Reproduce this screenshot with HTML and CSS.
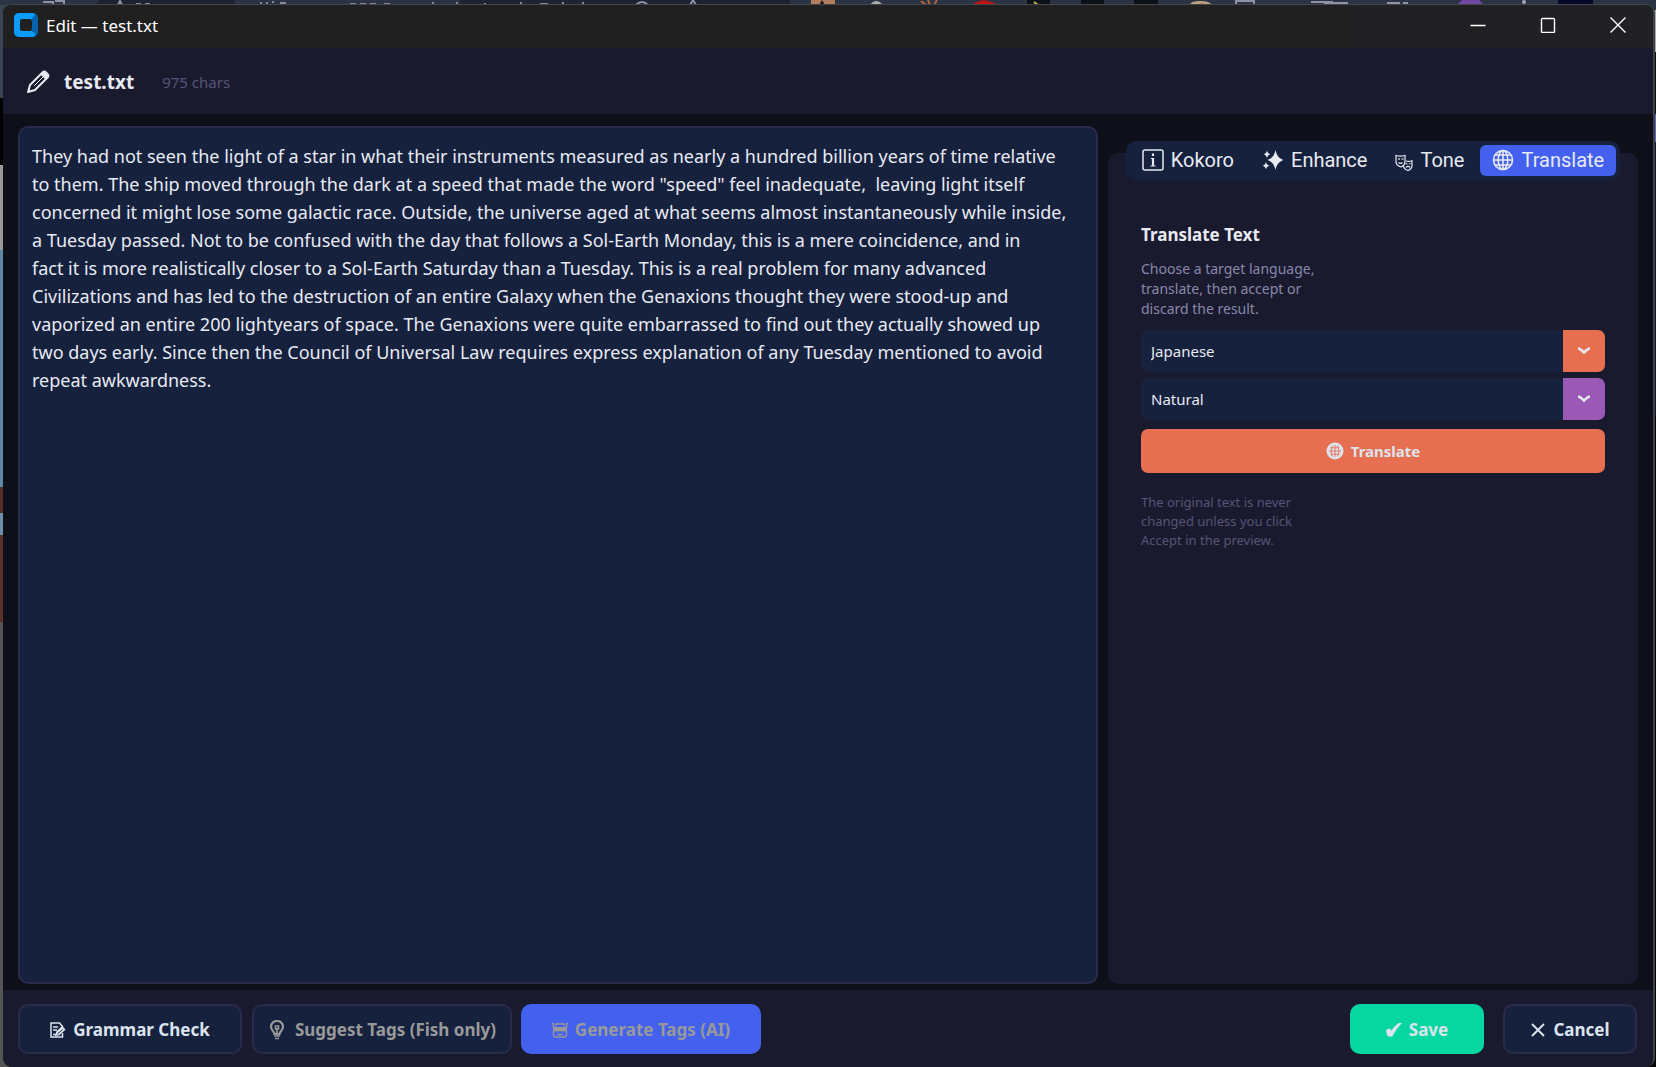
FILE: index.html
```html
<!DOCTYPE html>
<html lang="en">
<head>
    <meta charset="UTF-8">
    <meta name="viewport" content="width=device-width, initial-scale=1.0">
    <title>Edit — test.txt</title>
    <link rel="stylesheet" href="styles.css">
</head>
<body>
    <!-- sliver of the browser behind the window -->
    <svg class="desktop-top" viewBox="0 0 1656 5" preserveAspectRatio="none" aria-hidden="true">
        <path d="M100 0h135v5H94zM460 0h330v5H460z" fill="#1c2431"/>
        <path d="M43 2h10v3M55 1h9v4M118 5l2-4 2 4M636 5q6-6 12 0M690 5l3-5 3 5M1236 5V1h18v4M1311 2h22M1387 3h13M1403 3h5" fill="none" stroke="#8d92a8" stroke-width="2"/>
        <path d="M136 4h5M145 4h5M260 3h2M266 3h2M272 2h2M280 3h6M350 4h6M360 4h6M370 4h6M384 4h6M432 3h2M456 3h2M484 4h2M520 3h2M540 4h8M562 3h2M582 3h2" stroke="#858a9a" stroke-width="2"/>
        <path d="M811 0h24v5h-24z" fill="#b07d5e"/>
        <path d="M819 5l3-5 3 5z" fill="#1a1a1a"/>
        <path d="M870 5q6-8 13 0z" fill="#aaa"/>
        <path d="M921 1l5 4M928 0l2 5M937 0l-3 5" stroke="#b5623c" stroke-width="2"/>
        <path d="M974 5V3l9-3 12 3v2z" fill="#c31212"/>
        <path d="M1027 0h23v5h-23zM1081 0h23v5h-23zM1134 0h24v5h-24z" fill="#0c1019"/>
        <path d="M1034 2l4 3" stroke="#c5b53a" stroke-width="2"/>
        <path d="M1190 5q0-4 10-4t12 4z" fill="#b99f7b"/>
        <path d="M1197 5q5-3 10 0z" fill="#b33b3b"/>
        <path d="M1324 2h24v3h-24z" fill="#8d92a8"/>
        <path d="M1457 5l5-5h17l5 5z" fill="#7046a5"/>
        <circle cx="1524" cy="2" r="2" fill="#a4a8ba"/>
        <path d="M1558 0h35v5h-35z" fill="#04092c"/>
    </svg>

    <div class="window">
        <header class="titlebar">
            <svg class="app-logo" viewBox="0 0 24 24" aria-hidden="true">
                <rect width="24" height="24" rx="5" fill="#0562ae"/>
                <path d="M5 0h13a2 2 0 0 1 1 4l-1 2v12l1 1a2.500 2.500 0 0 1-1 5H5a5 5 0 0 1-5-5V5a5 5 0 0 1 5-5z" fill="#0a9bfb"/>
                <rect x="6" y="6" width="12" height="12" rx="2" fill="#202020"/>
            </svg>
            <span class="titlebar-text">Edit — test.txt</span>
            <div class="window-controls">
                <button type="button" aria-label="Minimize">
                    <svg viewBox="0 0 16 16"><path d="M0.500 8.500h15"/></svg>
                </button>
                <button type="button" aria-label="Maximize">
                    <svg viewBox="0 0 16 16"><rect x="1.500" y="1.500" width="13" height="14" rx="1"/></svg>
                </button>
                <button type="button" aria-label="Close">
                    <svg viewBox="0 0 16 16"><path d="M0.500 0.500l15 15M15.500 0.500l-15 15"/></svg>
                </button>
            </div>
        </header>

        <div class="file-header">
            <svg class="pencil" viewBox="0 0 24 24" aria-hidden="true">
                <path d="M2 22l2-7L16.500 2.500a2.500 2.500 0 0 1 3.500 0l1.500 1.500a2.500 2.500 0 0 1 0 3.500L9 20z" fill="none" stroke="currentColor" stroke-width="2" stroke-linejoin="round"/>
                <path d="M14.500 4.500l2.500-2.500h3l2.500 2.500v3L20 10zM1.500 22.500l1-4 3 3z" fill="currentColor"/>
                <path d="M8 16L17 7" stroke="currentColor" stroke-width="1"/>
            </svg>
            <h1>test.txt</h1>
            <span class="char-count">975 chars</span>
        </div>

        <main class="workspace">
            <textarea class="editor" aria-label="File text" spellcheck="false">They had not seen the light of a star in what their instruments measured as nearly a hundred billion years of time relative
to them. The ship moved through the dark at a speed that made the word "speed" feel inadequate,  leaving light itself
concerned it might lose some galactic race. Outside, the universe aged at what seems almost instantaneously while inside,
a Tuesday passed. Not to be confused with the day that follows a Sol-Earth Monday, this is a mere coincidence, and in
fact it is more realistically closer to a Sol-Earth Saturday than a Tuesday. This is a real problem for many advanced
Civilizations and has led to the destruction of an entire Galaxy when the Genaxions thought they were stood-up and
vaporized an entire 200 lightyears of space. The Genaxions were quite embarrassed to find out they actually showed up
two days early. Since then the Council of Universal Law requires express explanation of any Tuesday mentioned to avoid
repeat awkwardness.</textarea>

            <aside class="side">
                <nav class="tabs" role="tablist">
                    <button type="button" class="tab" role="tab">
                        <svg class="icon-lg" viewBox="0 0 22 22"><rect x="1" y="1" width="20" height="20" rx="2" fill="none" stroke="currentColor" stroke-width="1.500"/><path d="M11 9v8M11 4.500v2.500" stroke="currentColor" stroke-width="2.200"/><path d="M9 9.500h2M8.500 17h5" stroke="currentColor"/></svg>
                        Kokoro
                    </button>
                    <button type="button" class="tab" role="tab">
                        <svg class="icon-lg" viewBox="0 0 22 22"><path d="M13.500 1c1.300 5.500 3 8 8 10-5 2-6.700 4.500-8 10-1.300-5.500-3-8-8-10 5-2 6.700-4.500 8-10zM5 1.500c.6 2.200 1.400 3.200 3.500 3.800C6.400 6 5.600 7 5 9 4.400 7 3.600 6 1.500 5.300 3.600 4.700 4.400 3.700 5 1.500zM4 13c.6 2.200 1.400 3 3.500 3.700C5.400 17.400 4.600 18.200 4 20.300c-.6-2.100-1.400-2.900-3.500-3.600C2.600 16 3.400 15.200 4 13z" fill="currentColor"/></svg>
                        Enhance
                    </button>
                    <button type="button" class="tab" role="tab">
                        <svg class="icon-mask" viewBox="0 0 18 22"><g fill="none" stroke="currentColor" stroke-width="1.200"><path d="M1 6.500c3 .9 6 .9 9 0v6c0 2.500-1.500 4.500-4 5.500C3 17 1 15 1 12.500z"/><path d="M11 12c2 .6 4 .5 6-.3v4.800c0 2.500-1.500 4-4 5-3-1-4.500-3-4.700-5"/><path d="M3 9.800l2 .3M6.500 10.100l2-.3M3.500 13.500c1.500 1.200 2.500 1.200 4 0M10.500 14.500l2 .5M14 15l1.500-.5M11 18.500c1-1.500 3-1.500 4 0"/></g></svg>
                        Tone
                    </button>
                    <button type="button" class="tab active" role="tab" aria-selected="true">
                        <svg class="icon-lg" viewBox="0 0 22 22"><g fill="none" stroke="currentColor" stroke-width="1.600"><circle cx="11" cy="11" r="9.500"/><ellipse cx="11" cy="11" rx="4.800" ry="9.500"/><path d="M11 1.500v19M1.500 11h19M3 6h16M3 16h16"/></g></svg>
                        Translate
                    </button>
                </nav>

                <form class="translate-form">
                    <h2>Translate Text</h2>
                    <p class="intro">Choose a target language, translate, then accept or discard the result.</p>
                    <div class="select-box orange">
                        <select aria-label="Target language"><option>Japanese</option></select>
                        <svg viewBox="0 0 14 8"><path d="M1 1.500c2 0 3.500 1.500 6 4 2.500-2.500 4-4 6-4"/></svg>
                    </div>
                    <div class="select-box purple">
                        <select aria-label="Translation style"><option>Natural</option></select>
                        <svg viewBox="0 0 14 8"><path d="M1 1.500c2 0 3.500 1.500 6 4 2.500-2.500 4-4 6-4"/></svg>
                    </div>
                    <button type="button" class="translate-btn">
                        <svg class="icon-md" viewBox="0 0 18 18"><circle cx="9" cy="9" r="8.500" fill="currentColor"/><path d="M9 3v12M3 9h12M4.500 5.800h9M4.500 12.200h9M6.500 3.500c-1.800 3.500-1.800 7.500 0 11M11.500 3.500c1.800 3.500 1.800 7.500 0 11" fill="none" stroke="#e76f51" stroke-width=".9"/></svg>
                        Translate
                    </button>
                    <p class="note">The original text is never changed unless you click Accept in the preview.</p>
                </form>
            </aside>
        </main>

        <footer class="actions">
            <button type="button" class="btn grammar">
                <svg class="icon-sm" viewBox="0 0 16 16"><g fill="none" stroke="currentColor" stroke-width="1.500"><path d="M12.500 11v4H1V1h8.500l3.500 4M3 5h5M3 8h4M3 12.500h3"/><path d="M6 13l1-3 5-5 2.500 2.500L9 12.500z" fill="currentColor"/></g><path d="M7.500 12l5-4.500" stroke="#16213e"/></svg>
                Grammar Check
            </button>
            <button type="button" class="btn suggest" disabled>
                <svg class="icon-bulb" viewBox="0 0 18 20"><path d="M6.500 14c0-2-3.500-3.500-3.500-7.500a6 5.500 0 0 1 12 0c0 4-3.500 5.500-3.500 7.500z" fill="none" stroke="currentColor" stroke-width="2.200"/><path d="M9 14V8M7.500 6h3v3h-3zM6 16h6M7 18.500h4" fill="none" stroke="currentColor" stroke-width="1.600"/></svg>
                Suggest Tags (Fish only)
            </button>
            <button type="button" class="btn generate" disabled>
                <svg class="icon-sm" viewBox="0 0 16 16"><path d="M1 5h14v4.500H1z" fill="currentColor"/><path d="M3 4.500l1-2.500h8l1 2.500M1 1v4M15 1v4M0 1.500h2M14 1.500h2M1.500 9v3.500q0 2.500 2.500 2.500h8q2.500 0 2.500-2.500V9M5.500 12.500h5" fill="none" stroke="currentColor" stroke-width="1.300"/></svg>
                Generate Tags (AI)
            </button>
            <button type="button" class="btn save">
                <svg class="icon-sm" viewBox="0 0 16 16"><path d="M0 8.500q2-3 4.500-1.500l.5 2Q9 3 13 1h3Q10 7 6.500 14q-2 1.500-5 0z" fill="currentColor"/></svg>
                Save
            </button>
            <button type="button" class="btn cancel">
                <svg class="icon-sm" viewBox="0 0 16 16"><path d="M2 2l12 12M14 2L2 14" stroke="currentColor" stroke-width="1.900"/></svg>
                Cancel
            </button>
        </footer>
    </div>
</body>
</html>
```

FILE: styles.css
```css
* {
    margin: 0;
    padding: 0;
    box-sizing: border-box;
}

/* desktop and other windows show at both sides */
body {
    font-family: 'Noto Sans', 'Open Sans', sans-serif;
    background:
        linear-gradient(#3c4452 98px, #000 98px 165px, #9a9a98 165px 250px, #5f88a4 250px 487px, #5c2a2a 487px 513px, #6f8fa5 513px 535px, #5c2f2c 535px 622px, #555 622px) left / 50% 100% no-repeat,
        linear-gradient(#2b3445 10px, #aaa 10px 52px, #0a0a0c 52px 114px, #5a6ab8 114px 142px, #10182c 142px 415px, #050508 415px) right / 50% 100% no-repeat;
    color: #e8eaf2;
    height: 100vh;
    padding: 4px 1px 0 3px;
    overflow: hidden;
}

button,
select,
textarea {
    font: inherit;
    color: inherit;
    border: none;
}

svg {
    flex: none;
}

.desktop-top {
    position: absolute;
    top: 0;
    left: 0;
    width: 100%;
    height: 5px;
    background: #2b3445;
}

.window {
    position: relative;
    height: 100%;
    display: flex;
    flex-direction: column;
    background: #0f0f1a;
    border-top: 1px solid #45474d;
    border-right: 2px solid #3f4045;
    border-radius: 9px;
    overflow: hidden;
}

/* title bar */
.titlebar {
    display: flex;
    align-items: center;
    height: 43px;
    padding: 0 0 3px 11px;
    background: linear-gradient(90deg, #202020 70%, #202125);
    color: #fff;
    font-size: 17px;
}

.app-logo {
    width: 24px;
    height: 24px;
    margin-right: 8px;
}

.window-controls {
    display: flex;
    margin-left: auto;
}

.window-controls button {
    display: grid;
    place-items: center;
    width: 70px;
    height: 40px;
    background: none;
}

.window-controls svg {
    width: 16px;
    height: 16px;
    fill: none;
    stroke: #fff;
    stroke-width: 1.4;
}

/* file header */
.file-header {
    display: flex;
    align-items: center;
    height: 66px;
    padding: 2px 0 0 23px;
    background: #1a1a2e;
}

.pencil {
    width: 24px;
    height: 24px;
    margin-right: 14px;
}

.file-header h1 {
    font-size: 19px;
    margin-right: 28px;
}

.char-count {
    color: #555577;
    font-size: 15px;
}

/* editor and side panel */
.workspace {
    flex: 1;
    display: grid;
    grid-template-columns: minmax(0, 1080fr) minmax(0, 530fr);
    gap: 10px;
    padding: 12px 15px 6px;
}

.editor {
    width: 100%;
    height: 100%;
    padding: 14px 10px 14px 12px;
    background: #16213e;
    border: 2px solid #2a2a4a;
    border-radius: 10px;
    font-size: 18px;
    line-height: 28px;
    resize: none;
    outline: none;
}

.side {
    display: flex;
    flex-direction: column;
    align-items: center;
    margin-top: 27px;
    background: #1a1a2e;
    border-radius: 10px;
}

.tabs {
    display: flex;
    gap: 4px;
    margin-top: -12px;
    padding: 4px;
    background: #16213e;
    border-radius: 10px;
    font-family: Roboto, sans-serif;
    font-size: 20px;
}

.tab {
    display: flex;
    align-items: center;
    gap: 7px;
    height: 31px;
    padding: 0 12px 2px;
    background: none;
    border-radius: 6px;
}

.tab.active {
    background: #4361ee;
}

.icon-lg {
    width: 22px;
    height: 22px;
}

.icon-mask {
    width: 18px;
    height: 22px;
}

.icon-md {
    width: 18px;
    height: 18px;
}

.icon-bulb {
    width: 18px;
    height: 20px;
}

.icon-sm {
    width: 16px;
    height: 16px;
}

.translate-form {
    display: flex;
    flex-direction: column;
    align-self: stretch;
    padding: 43px 33px 0;
}

.translate-form h2 {
    font-size: 17px;
    line-height: 24px;
    margin-bottom: 12px;
}

.intro {
    max-width: 190px;
    margin-bottom: 11px;
    color: #8888aa;
    font-size: 14px;
    line-height: 20px;
}

.select-box {
    display: grid;
    grid-template-columns: 1fr 42px;
    align-items: center;
    justify-items: center;
    height: 42px;
    margin-bottom: 6px;
    border-radius: 7px;
}

.select-box select {
    grid-area: 1 / 1 / 2 / 3;
    width: 100%;
    height: 42px;
    padding-left: 10px;
    border-radius: 7px;
    appearance: none;
    font-size: 15px;
}

.select-box svg {
    grid-area: 1 / 2;
    width: 14px;
    height: 8px;
    fill: none;
    stroke: currentColor;
    stroke-width: 2.6;
    pointer-events: none;
}

.orange select {
    background: linear-gradient(#e76f51, #e76f51) right / 42px 100% no-repeat #16213e;
}

.purple select {
    background: linear-gradient(#9b59b6, #9b59b6) right / 42px 100% no-repeat #16213e;
}

.translate-btn {
    display: flex;
    align-items: center;
    justify-content: center;
    gap: 7px;
    height: 44px;
    margin: 3px 0 20px;
    background: #e76f51;
    border-radius: 7px;
    color: #dce4ee;
    font-size: 15px;
    font-weight: 700;
}

.note {
    max-width: 170px;
    color: #555577;
    font-size: 13px;
    line-height: 19px;
}

/* footer */
.actions {
    display: flex;
    align-items: center;
    height: 77px;
    padding: 0 16px 0 15px;
    background: #1a1a2e;
}

.btn {
    display: flex;
    align-items: center;
    justify-content: center;
    gap: 7px;
    height: 50px;
    padding-top: 2px;
    background: #16213e;
    border: 2px solid #2a2a4a;
    border-radius: 10px;
    color: #dce4ee;
    font-size: 17px;
    font-weight: 700;
}

.btn:disabled {
    color: #999;
}

.grammar {
    width: 224px;
    margin-right: 10px;
}

.suggest {
    width: 260px;
    margin-right: 9px;
    gap: 9px;
}

.generate {
    width: 240px;
    background: #4361ee;
    border: none;
}

.save {
    width: 134px;
    margin-left: auto;
    margin-right: 19px;
    background: #06d6a0;
    border: none;
}

.cancel {
    width: 134px;
}
```
